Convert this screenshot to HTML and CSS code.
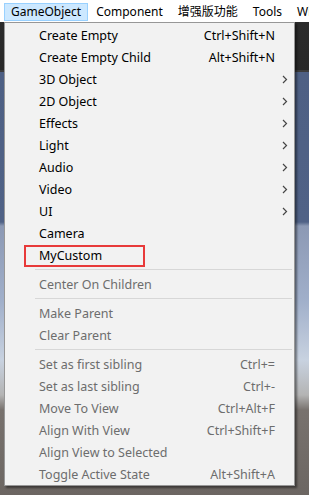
FILE: index.html
```html
<!DOCTYPE html>
<html lang="zh">
<head>
    <meta charset="UTF-8">
    <title>GameObject menu</title>

    <link rel="stylesheet" href="styles.css">
</head>
<body>

<div id="menubar">
    <span class="top active">GameObject</span>
    <span class="top">Component</span>
    <span class="top">增强版功能</span>
    <span class="top">Tools</span>
    <span class="top">Window</span>
</div>

<div id="scene">
    <div id="menu">
        <div class="item"><span class="label">Create Empty</span><span class="key">Ctrl+Shift+N</span><span class="arrow"></span></div>
        <div class="item"><span class="label">Create Empty Child</span><span class="key">Alt+Shift+N</span><span class="arrow"></span></div>
        <div class="item"><span class="label">3D Object</span><span class="key"></span><span class="arrow"><svg width="6" height="9" viewBox="0 0 6 9"><polyline points="1,1 4.5,4.5 1,8"/></svg></span></div>
        <div class="item"><span class="label">2D Object</span><span class="key"></span><span class="arrow"><svg width="6" height="9" viewBox="0 0 6 9"><polyline points="1,1 4.5,4.5 1,8"/></svg></span></div>
        <div class="item"><span class="label">Effects</span><span class="key"></span><span class="arrow"><svg width="6" height="9" viewBox="0 0 6 9"><polyline points="1,1 4.5,4.5 1,8"/></svg></span></div>
        <div class="item"><span class="label">Light</span><span class="key"></span><span class="arrow"><svg width="6" height="9" viewBox="0 0 6 9"><polyline points="1,1 4.5,4.5 1,8"/></svg></span></div>
        <div class="item"><span class="label">Audio</span><span class="key"></span><span class="arrow"><svg width="6" height="9" viewBox="0 0 6 9"><polyline points="1,1 4.5,4.5 1,8"/></svg></span></div>
        <div class="item"><span class="label">Video</span><span class="key"></span><span class="arrow"><svg width="6" height="9" viewBox="0 0 6 9"><polyline points="1,1 4.5,4.5 1,8"/></svg></span></div>
        <div class="item"><span class="label">UI</span><span class="key"></span><span class="arrow"><svg width="6" height="9" viewBox="0 0 6 9"><polyline points="1,1 4.5,4.5 1,8"/></svg></span></div>
        <div class="item"><span class="label">Camera</span><span class="key"></span><span class="arrow"></span></div>
        <div class="item marked"><span class="label">MyCustom</span><span class="key"></span><span class="arrow"></span></div>
        <div class="sep"></div>
        <div class="item off"><span class="label">Center On Children</span><span class="key"></span><span class="arrow"></span></div>
        <div class="sep"></div>
        <div class="item off"><span class="label">Make Parent</span><span class="key"></span><span class="arrow"></span></div>
        <div class="item off"><span class="label">Clear Parent</span><span class="key"></span><span class="arrow"></span></div>
        <div class="sep"></div>
        <div class="item off"><span class="label">Set as first sibling</span><span class="key">Ctrl+=</span><span class="arrow"></span></div>
        <div class="item off"><span class="label">Set as last sibling</span><span class="key">Ctrl+-</span><span class="arrow"></span></div>
        <div class="item off"><span class="label">Move To View</span><span class="key">Ctrl+Alt+F</span><span class="arrow"></span></div>
        <div class="item off"><span class="label">Align With View</span><span class="key">Ctrl+Shift+F</span><span class="arrow"></span></div>
        <div class="item off"><span class="label">Align View to Selected</span><span class="key"></span><span class="arrow"></span></div>
        <div class="item off"><span class="label">Toggle Active State</span><span class="key">Alt+Shift+A</span><span class="arrow"></span></div>
    </div>
</div>

</body>
</html>
```

FILE: styles.css
```css
body {
    margin: 0;
    width: 309px;
    height: 495px;
    overflow: hidden;
    font-family: "Noto Sans", "Noto Sans CJK SC", sans-serif;
    font-size: 12.5px;
    color: rgb(0, 0, 0);
    background: linear-gradient(to bottom,
        rgb(255, 255, 255) 0, rgb(255, 255, 255) 22px,
        rgb(43, 43, 43) 22px, rgb(40, 40, 40) 70px,
        rgb(60, 60, 60) 70px, rgb(60, 60, 60) 72px,
        rgb(78, 96, 132) 72px, rgb(80, 98, 134) 222px,
        rgb(140, 153, 180) 226px, rgb(160, 175, 202) 300px,
        rgb(200, 210, 224) 360px, rgb(180, 180, 180) 395px,
        rgb(120, 114, 110) 410px, rgb(108, 102, 98) 495px);
}

#menubar {
    display: flex;
    height: 22px;
    overflow: hidden;
    background-color: rgb(255, 255, 255);
    white-space: nowrap;
    padding-left: 4px;
    font-size: 12px;
}

.top {
    flex: none;
    box-sizing: border-box;
    margin-top: 3px;
    height: 18px;
    line-height: 16px;
    padding: 0 6px;
    margin-right: 1px;
    border: 1px solid transparent;
}

.active {
    background-color: rgb(204, 232, 255);
    border-color: rgb(153, 209, 255);
}

#scene {
    padding-left: 4px;
}

#menu {
    width: 289px;
    background-color: rgb(242, 242, 242);
    border: 1px solid rgb(151, 151, 151);
    box-shadow: 2px 2px 2px rgba(0, 0, 0, 0.45);
    padding: 1px 0 0;
}

.item {
    display: flex;
    align-items: center;
    height: 22px;
    padding-left: 34px;
    white-space: nowrap;
}

.label {
    flex: 1;
}

.key {
    text-align: right;
}

.arrow {
    width: 19px;
    display: flex;
    justify-content: center;
}

.arrow svg {
    fill: none;
    stroke: rgb(70, 70, 70);
    stroke-width: 1.2;
}

.off {
    color: rgb(109, 109, 109);
}

.marked {
    position: relative;
}

.marked::before {
    content: "";
    position: absolute;
    left: 19px;
    top: 1px;
    width: 117px;
    height: 18px;
    border: 2px solid rgb(232, 58, 58);
}

.sep {
    height: 1px;
    background-color: rgb(215, 215, 215);
    margin: 3px 2px 3px 30px;
}
```
